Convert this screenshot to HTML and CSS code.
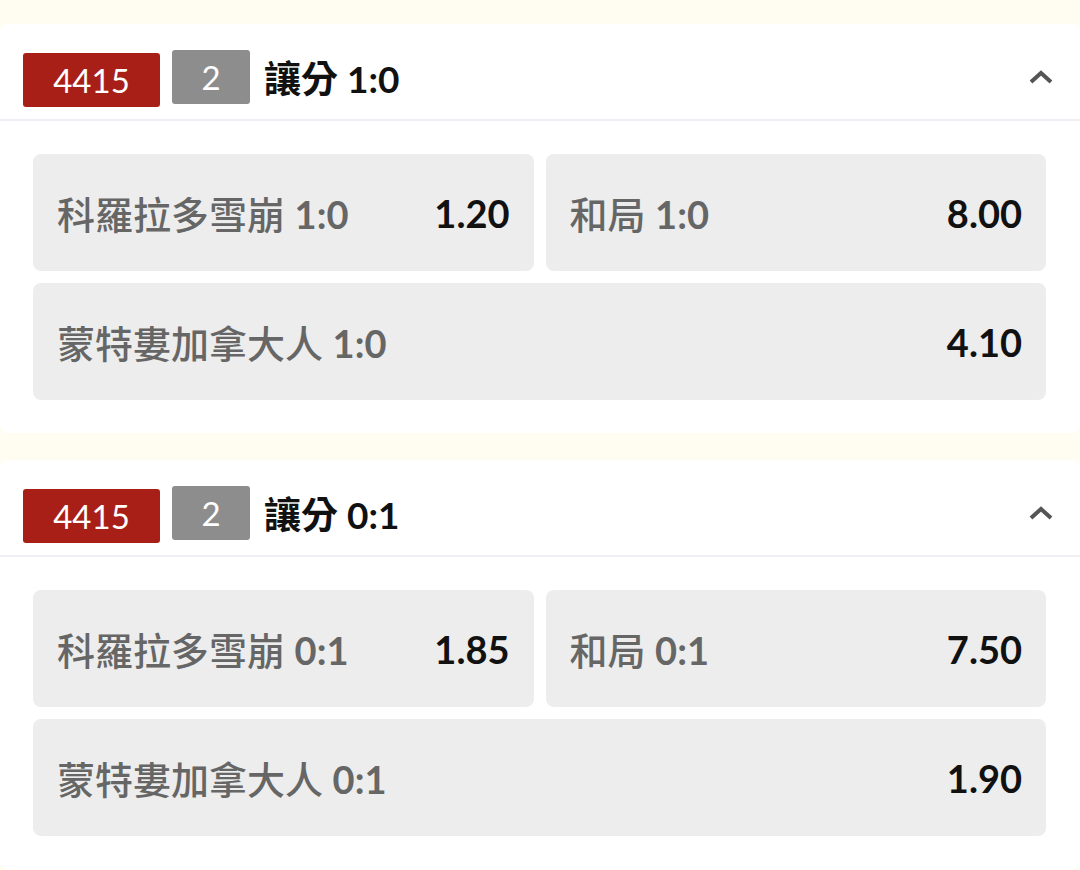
FILE: index.html
```html
<!DOCTYPE html>
<html lang="zh-Hant">

<head>
    <meta charset="UTF-8" />
    <meta name="viewport" content="width=device-width, initial-scale=1.0" />
    <title>讓分</title>
    <link rel="stylesheet" href="styles.css">
</head>

<body>
    <div class="page">
        <div class="market">
            <div class="market-head">
                <span class="badge badge-red">4415</span>
                <span class="badge badge-grey">2</span>
                <span class="market-title">讓分 1:0</span>
                <svg class="chevron" width="26" height="16" viewBox="0 0 26 16">
                    <path d="M3 13 L13 4 L23 13" fill="none" stroke="#555" stroke-width="4" />
                </svg>
            </div>
            <div class="odds-grid">
                <div class="odd"><span class="odd-name">科羅拉多雪崩 <b>1:0</b></span><span class="odd-value">1.20</span></div>
                <div class="odd"><span class="odd-name">和局 <b>1:0</b></span><span class="odd-value">8.00</span></div>
                <div class="odd odd-wide"><span class="odd-name">蒙特婁加拿大人 <b>1:0</b></span><span class="odd-value">4.10</span></div>
            </div>
        </div>

        <div class="market">
            <div class="market-head">
                <span class="badge badge-red">4415</span>
                <span class="badge badge-grey">2</span>
                <span class="market-title">讓分 0:1</span>
                <svg class="chevron" width="26" height="16" viewBox="0 0 26 16">
                    <path d="M3 13 L13 4 L23 13" fill="none" stroke="#555" stroke-width="4" />
                </svg>
            </div>
            <div class="odds-grid">
                <div class="odd"><span class="odd-name">科羅拉多雪崩 <b>0:1</b></span><span class="odd-value">1.85</span></div>
                <div class="odd"><span class="odd-name">和局 <b>0:1</b></span><span class="odd-value">7.50</span></div>
                <div class="odd odd-wide"><span class="odd-name">蒙特婁加拿大人 <b>0:1</b></span><span class="odd-value">1.90</span></div>
            </div>
        </div>
    </div>
</body>

</html>
```

FILE: styles.css
```css
body {
    background-color: #fffdf1;
    font-family: Lato, "Noto Sans CJK TC", sans-serif;
    margin: 0;
    padding: 0;
}

.page {
    padding-top: 24px;
}

.market {
    background-color: #ffffff;
    border-radius: 8px;
    margin-bottom: 27px;
}

.market-head {
    display: flex;
    align-items: center;
    height: 85px;
    padding: 10px 26px 0 23px;
    border-bottom: 2px solid #efeff5;
}

.badge {
    display: inline-flex;
    align-items: center;
    justify-content: center;
    height: 54px;
    border-radius: 3px;
    color: #fff;
    font-size: 33px;
}

.badge-red {
    width: 137px;
    background-color: #a81f17;
    margin-top: 6px;
}

.badge-grey {
    width: 78px;
    background-color: #8d8d8d;
    margin-left: 12px;
}

.market-title {
    margin-left: 14px;
    font-size: 37px;
    font-weight: bold;
    color: #111;
}

.chevron {
    margin-left: auto;
}

.odds-grid {
    display: grid;
    grid-template-columns: 1fr 1fr;
    gap: 12px;
    padding: 33px 34px 33px 33px;
}

.odd {
    display: flex;
    align-items: center;
    justify-content: space-between;
    height: 117px;
    padding: 0 24px;
    background-color: #ededed;
    border-radius: 8px;
}

.odd-wide {
    grid-column: 1 / 3;
}

.odd-name {
    font-size: 38px;
    font-weight: 500;
    color: #666;
}

.odd-name b {
    font-weight: bold;
}

.odd-value {
    font-size: 38px;
    font-weight: bold;
    color: #111;
}
```
